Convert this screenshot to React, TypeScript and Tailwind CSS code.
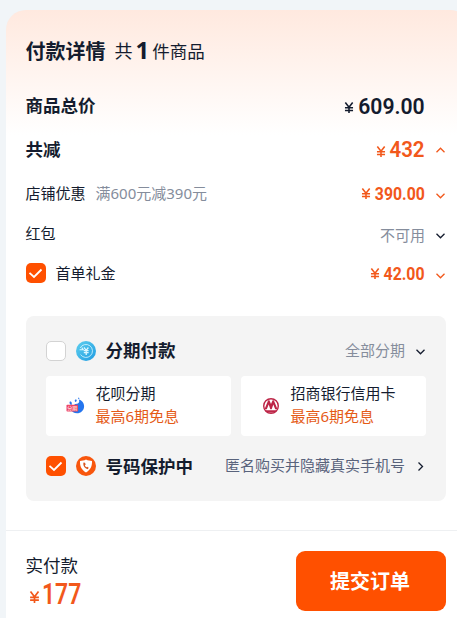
import type { ReactNode } from "react";

const cjk = "font-['Noto_Sans','Noto_Sans_CJK_SC',sans-serif]";
const num = "flex shrink-0 justify-end font-['Roboto','Noto_Sans',sans-serif]";

function Chevron({ dir, className }: { dir: "up" | "down" | "right"; className: string }) {
  const d = { up: "M1.5 7.2 5.5 3.2l4 4", down: "M1.5 3.8 5.5 7.8l4-4", right: "M3.5 1.5 7.5 5.5l-4 4" }[dir];
  return (
    <svg viewBox="0 0 11 11" className={`block h-[11px] w-[11px] shrink-0 ${className}`} fill="none" stroke="currentColor" strokeWidth={1.3}>
      <path d={d} />
    </svg>
  );
}

function Check({ checked }: { checked: boolean }) {
  if (!checked) return <span className="h-5 w-5 shrink-0 rounded-[5px] border border-[#d3d3d3] bg-white" />;
  return (
    <span className="flex h-5 w-5 shrink-0 items-center justify-center rounded-[5px] bg-[#ff5000]">
      <svg viewBox="0 0 20 20" className="h-5 w-5" fill="none" stroke="#fff" strokeWidth="1.8">
        <path d="M3.5 9.9 8 14 15.5 6.5" />
      </svg>
    </span>
  );
}

function Yuan({ className }: { className: string }) {
  return (
    <svg viewBox="0 0 10 12" className={`block shrink-0 ${className}`} fill="none" stroke="currentColor" strokeWidth={1.7}>
      <path d="M1 .6 5 5.8 9 .6M5 5.5V12M.6 6.3h8.8M.6 9.2h8.8" />
    </svg>
  );
}

function InstallmentIcon() {
  return (
    <svg viewBox="0 0 20 20" className="h-5 w-5 shrink-0">
      <defs>
        <linearGradient id="sky" x1="0" y1="0" x2="1" y2="1">
          <stop offset="0" stopColor="#5fd0ee" />
          <stop offset="1" stopColor="#1f9be2" />
        </linearGradient>
      </defs>
      <circle cx="10" cy="10" r="10" fill="url(#sky)" />
      <g fill="none" stroke="#dcf7ff" strokeWidth="1.1">
        <path d="M4.2 7A6.5 6.5 0 1 1 4.6 13.6" strokeWidth=".8" />
        <path d="M3.6 8.8h3.6L5.8 6.6" />
        <path d="m8 6.5 2.2 2.8 2.2-2.8M10.2 9v5M7.8 9.7h4.8M7.8 11.7h4.8" strokeWidth="1.3" />
      </g>
    </svg>
  );
}

function ShieldIcon() {
  return (
    <svg viewBox="0 0 20 20" className="h-5 w-5 shrink-0">
      <circle cx="10" cy="10" r="10" fill="#f8560d" />
      <path d="M10 3.6c2 1 4 1.4 6 1.5.3 5-1.5 9-6 11.4C5.500 14.100 3.700 10.100 4 5.100c2-.1 4-.5 6-1.500Z" fill="#fff" />
      <path d="M7.500 6.600c-.8 3 1.200 6.100 4.300 6.600l.9-1.500-1.500-1-1 .6c-.8-.5-1.200-1.200-1.300-2l.8-.7-.7-1.900Z" fill="#d8561f" />
    </svg>
  );
}

function HuabeiIcon() {
  return (
    <svg viewBox="0 0 20 20" className="h-5 w-5 shrink-0">
      <path d="M9 8c1.800.3 3.800-.6 4.200-2.200.2-.9-.1-1.600-.6-2.300 3 .7 5.500 3.200 5.500 6.800 0 4.300-3.300 7-7.100 7-3 0-5.200-1.500-6-4Z" fill="#2475ee" />
      <path d="M4 5.600c.9-.5 1.500.3 1.700 1.200l.2 2H4.500C3.400 7.700 3.200 6.200 4 5.600ZM9.300 3.600c.9-.3 1.500.3 1.400 1.200-.1.700-.6 1.100-1.200 1.200-.9-.4-1-2-.2-2.400ZM12 1.800c.9-.3 1.600.2 1.500.8l-1.300.4Z" fill="#2475ee" />
      <rect x=".5" y="8.800" width="11.500" height="6.800" rx=".8" fill="#ee4463" />
      <text x="6.200" y="14.200" textAnchor="middle" fontSize="5" fill="#fff" className={cjk}>分期</text>
    </svg>
  );
}

function CmbIcon() {
  return (
    <svg viewBox="0 0 20 20" className="h-5 w-5 shrink-0">
      <circle cx="10" cy="10" r="7.300" fill="#fff" stroke="#bd2547" strokeWidth="1.400" />
      <path d="M3.500 13.200 7.200 4.200h1.200L10 8l1.600-3.800h1.200l3.700 9h-2.300L12.300 8.500l-1.600 4.700H9.300L7.700 8.500 5.800 13.200Z" fill="#bd2547" />
      <path d="M4.500 14.200h11L14 16.600H6Z" fill="#bd2547" />
    </svg>
  );
}

function Row({ height, left, children }: { height: string; left: ReactNode; children: ReactNode }) {
  return (
    <div className={`flex shrink-0 items-center justify-between ${height}`}>
      <div className="flex items-center">{left}</div>
      <div className="flex items-center">{children}</div>
    </div>
  );
}

function Plan({ icon, name }: { icon: ReactNode; name: string }) {
  return (
    <div className="flex h-[60px] items-center rounded bg-white pl-5">
      {icon}
      <div className="ml-[9.5px] pb-0.5 text-[15px] leading-[23px] whitespace-nowrap">
        <div>{name}</div>
        <div className="text-[#e55b17]">最高6期免息</div>
      </div>
    </div>
  );
}

export default function App() {
  return (
    <div className={`h-[618px] w-[457px] overflow-hidden bg-[#f1f5f8] pt-2.5 pl-1.5 text-[#141c2e] ${cjk}`}>
      <main className="flex h-[608px] w-[464px] flex-col rounded-t-[20px] bg-white bg-linear-to-b from-[#ffe9df] to-white to-[125px] pt-5">
        <section className="flex flex-col pr-[24px] pl-5">
          <h1 className="-ml-[0.5px] flex h-10 items-center pt-[3px] whitespace-nowrap">
            <span className="text-[20px] font-bold">付款详情</span>
            <span className="ml-[9px] text-[18px]">共</span>
            <span className="mr-[3px] ml-[3px] pb-1 font-['Open_Sans',sans-serif] text-[24px] font-bold">1</span>
            <span className="text-[17.5px]">件商品</span>
          </h1>
          <Row height="mt-[13px] h-11" left={<span className="-ml-[0.5px] text-[17.5px] font-bold">商品总价</span>}>
            <Yuan className="mt-[5px] mr-[5px] h-[11px] w-[10px]" />
            <span className={`mr-[21px] w-[66px] pt-[3px] text-[22.5px] font-semibold ${num}`}><span className="origin-right scale-x-[0.94]">609.00</span></span>
          </Row>
          <Row height="h-11" left={<span className="-ml-[0.5px] text-[17.5px] font-bold">共减</span>}>
            <div className="flex items-center text-[#f2581b]">
              <Yuan className="mt-[5px] mr-1 h-[11px] w-[10px]" />
              <span className={`w-[35px] pt-0.5 text-[22.5px] font-semibold ${num}`}><span className="origin-right scale-x-[0.91]">432</span></span>
              <Chevron dir="up" className="mt-0.5 ml-2.5" />
            </div>
          </Row>
          <Row height="mt-0.5 h-10" left={<><span className="-ml-[0.5px] text-[15px]">店铺优惠</span><span className="ml-2.5 text-[15px] text-[#858d9c]">满600元减390元</span></>}>
            <div className="flex items-center text-[#f2581b]">
              <Yuan className="mr-1 h-[11px] w-[10px]" />
              <span className={`w-[50px] text-[18px] font-bold ${num}`}><span className="origin-right scale-x-[0.88]">390.00</span></span>
              <Chevron dir="down" className="mt-1 ml-2.5" />
            </div>
          </Row>
          <Row height="h-10" left={<span className="-ml-[0.5px] text-[15px]">红包</span>}>
            <span className="mt-1 text-[15px] text-[#858d9c]">不可用</span>
            <Chevron dir="down" className="mt-1 ml-2.5" />
          </Row>
          <Row height="h-10" left={<><Check checked /><span className="ml-[9.5px] text-[15px]">首单礼金</span></>}>
            <div className="flex items-center text-[#f2581b]">
              <Yuan className="mr-1 h-[11px] w-[10px]" />
              <span className={`w-[41px] text-[18px] font-bold ${num}`}><span className="origin-right scale-x-[0.88]">42.00</span></span>
              <Chevron dir="down" className="mt-1 ml-2.5" />
            </div>
          </Row>
          <div className="mt-[23px] flex h-[185px] w-[420px] flex-col rounded-lg bg-[#f4f4f4] px-5 pt-[15px]">
            <Row height="h-10" left={<><Check checked={false} /><span className="ml-2.5 flex"><InstallmentIcon /></span><span className="ml-[9.5px] pb-0.5 text-[17.5px] font-bold">分期付款</span></>}>
              <span className="pb-0.5 text-[15px] text-[#858d9c]">全部分期</span>
              <Chevron dir="down" className="ml-2.5" />
            </Row>
            <div className="mt-[5px] grid grid-cols-2 gap-2.5">
              <Plan icon={<HuabeiIcon />} name="花呗分期" />
              <Plan icon={<CmbIcon />} name="招商银行信用卡" />
            </div>
            <Row height="mt-2.5 h-10" left={<><Check checked /><span className="ml-2.5 flex"><ShieldIcon /></span><span className="ml-[9.5px] text-[17.5px] font-bold">号码保护中</span></>}>
              <span className="pb-0.5 text-[15px] text-[#59637c]">匿名购买并隐藏真实手机号</span>
              <Chevron dir="right" className="ml-2.5" />
            </Row>
          </div>
        </section>
        <footer className="mt-[29px] flex justify-between border-t border-[#eef0f2] pt-5 pr-[24px] pl-5">
          <div>
            <div className="-ml-[0.5px] h-[27px] pt-px text-[17.5px] leading-[27px]">实付款</div>
            <div className="flex h-[31px] items-center text-[#f2581b]">
              <Yuan className="mt-1.5 ml-[3px] h-[12px] w-[11px]" />
              <span className="ml-0.5 w-10 origin-left scale-x-[0.79] pt-0.5 font-['Roboto','Noto_Sans',sans-serif] text-[29px] font-semibold">177</span>
            </div>
          </div>
          <button className="h-[60px] w-[150px] rounded-[9px] bg-[#ff5000] pt-px pr-0.5 text-[20px] font-bold text-white">提交订单</button>
        </footer>
      </main>
    </div>
  );
}
